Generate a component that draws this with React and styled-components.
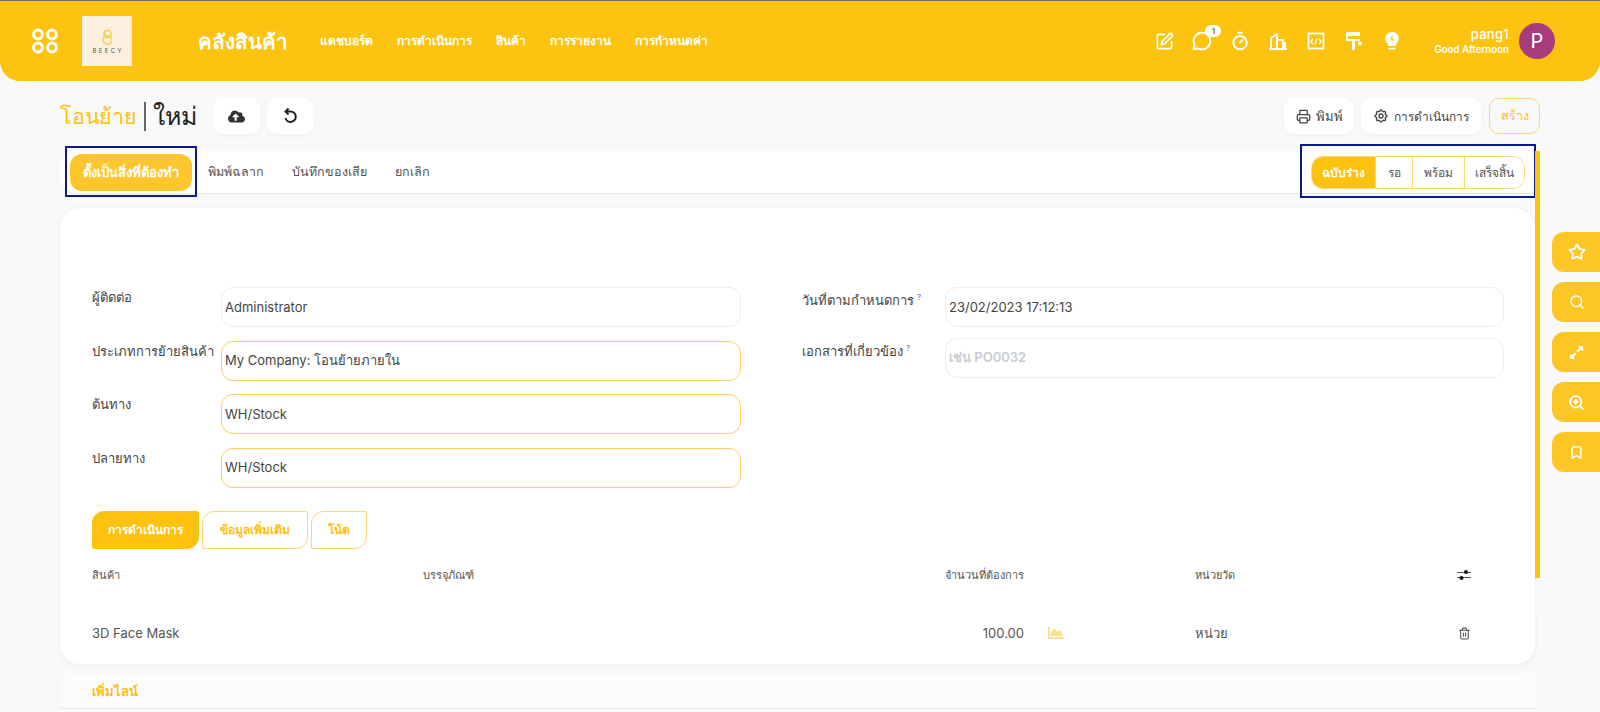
import React from 'react';
import styled, { createGlobalStyle } from 'styled-components';
import {
  SquarePen, MessageCircle, Timer, Printer, Star, Search, ZoomIn, Bookmark, Trash2,
} from 'lucide-react';
import { FaCloudUploadAlt, FaExpandAlt, FaChartArea } from 'react-icons/fa';
import { TbSettings } from 'react-icons/tb';

const GlobalStyle = createGlobalStyle`
  html, body { margin: 0; padding: 0; }
  body {
    background: #f9f9f9;
    font-family: Inter, "Noto Sans", "Open Sans", sans-serif;
    color: #444;
  }
  * { box-sizing: border-box; }
`;

const Page = styled.div`
  position: relative;
  width: 1600px;
  height: 712px;
  overflow: hidden;
  background: #f9f9f9;
  border-top: 1px solid #77705a;
`;

const Header = styled.header`
  height: 80px;
  background: #fdc311;
  border-radius: 0 0 20px 20px;
  display: flex;
  align-items: center;
  padding: 0 45px 0 31px;
  color: #fff;
`;

const Logo = styled.div`
  width: 50px;
  height: 50px;
  margin-left: 23px;
  background: #fbf0df;
  display: flex;
  flex-direction: column;
  align-items: center;
  justify-content: center;
  gap: 3px;
`;

const LogoWord = styled.span`
  font-size: 6px;
  letter-spacing: 2.4px;
  margin-right: -2.4px;
  color: #555;
  line-height: 6px;
`;

const AppTitle = styled.div`
  margin-left: 66px;
  width: 122px;
  font-size: 20.5px;
  font-weight: 600;
`;

const Nav = styled.nav`
  display: flex;
  gap: 24px;
  font-size: 12px;
  font-weight: 700;
  padding-bottom: 1px;
`;

const HeaderRight = styled.div`
  margin-left: auto;
  display: flex;
  align-items: center;
`;

const HeaderIcons = styled.div`
  display: flex;
  align-items: center;
  gap: 18px;
  margin-right: 32px;
`;

const IconSlot = styled.span`
  position: relative;
  width: 20px;
  height: 20px;
  display: flex;
  align-items: center;
  justify-content: center;
`;

const Badge = styled.span`
  position: absolute;
  top: -6px;
  right: -9px;
  width: 16px;
  height: 12px;
  border-radius: 6px;
  background: #fff;
  color: #8a7a3a;
  font-size: 8px;
  font-weight: 700;
  line-height: 12px;
  text-align: center;
`;

const UserText = styled.div`
  text-align: right;
  font-weight: 500;
  margin-right: 10px;
`;

const UserName = styled.div`
  font-size: 13px;
  letter-spacing: 0.3px;
  line-height: 16px;
`;

const Greeting = styled.div`
  font-size: 9.7px;
  font-weight: 600;
  line-height: 15px;
`;

const Avatar = styled.div`
  width: 36px;
  height: 36px;
  border-radius: 50%;
  background: #a93c7c;
  font-size: 20px;
  line-height: 36px;
  text-align: center;
`;

const Content = styled.main`
  padding: 17px 65px 0 60px;
`;

const TitleRow = styled.div`
  height: 36px;
  margin-right: -5px;
  display: flex;
  align-items: center;
`;

const Crumb = styled.span`
  font-size: 21.5px;
  letter-spacing: -0.2px;
  line-height: 36px;
  color: #fcc20f;
`;

const CrumbCurrent = styled.span`
  font-size: 25px;
  line-height: 29px;
  color: #222;
  border-left: 2px solid #666;
  margin-left: 7px;
  padding-left: 7px;
  margin-right: 16px;
`;

const WhiteButton = styled.button`
  height: 36px;
  width: ${p => p.$w}px;
  margin-right: 7px;
  border: 0;
  border-radius: 10px;
  background: #fff;
  color: #444;
  font: inherit;
  font-size: ${p => p.$fs || 13}px;
  display: flex;
  align-items: center;
  justify-content: center;
  gap: 5px;
  box-shadow: 0 2px 6px rgba(0, 0, 0, 0.03);
`;

const TitleActions = styled.div`
  margin-left: auto;
  display: flex;
  align-items: center;
`;

const CreateButton = styled.button`
  height: 36px;
  width: 51px;
  margin-left: 1px;
  border: 1px solid #fdd67c;
  border-radius: 10px;
  background: transparent;
  color: #fcc20f;
  font: inherit;
  font-size: 12.5px;
  padding: 0;
`;

const Toolbar = styled.div`
  height: 43px;
  margin-top: 17px;
  background: #fff;
  border-radius: 16px 0 0 16px;
  border-bottom: 1px solid #e8e8e8;
  display: flex;
  align-items: center;
  padding-left: 5px;
`;

const Highlight = styled.div`
  border: 2px solid #0b1a85;
  padding: ${p => p.$pad};
  margin-top: -1px;
  display: flex;
  flex-shrink: 0;
`;

const TodoButton = styled.button`
  width: 122px;
  height: 37px;
  border: 0;
  border-radius: 12px;
  background: #fcc62c;
  color: #fff;
  font: inherit;
  font-size: 13px;
  font-weight: 700;
  padding: 0;
  white-space: nowrap;
`;

const ToolLink = styled.span`
  font-size: 12.5px;
  color: #555;
  margin-left: ${p => p.$ml}px;
`;

const StatusGroup = styled(Highlight)`
  margin-left: auto;
  margin-right: -1px;
  margin-top: -3px;
`;

const Pills = styled.div`
  display: flex;
  height: 33px;
  border: 1px solid #fdd67c;
  border-radius: 12px;
  overflow: hidden;
  background: #fff;
`;

const Pill = styled.span`
  width: ${p => p.$w}px;
  display: flex;
  align-items: center;
  justify-content: center;
  font-size: 12px;
  font-weight: ${p => (p.$active ? 700 : 500)};
  color: ${p => (p.$active ? '#fff' : '#555')};
  background: ${p => (p.$active ? '#fcc20f' : '#fff')};
  border-left: ${p => (p.$active ? 0 : '1px solid #fdd67c')};
`;

const Card = styled.section`
  height: 456px;
  margin-top: 14px;
  background: #fff;
  border-radius: 20px;
  padding: 79px 0 0 32px;
  box-shadow: 0 0 4px rgba(0, 0, 0, 0.05);
`;

const FormGrid = styled.div`
  display: grid;
  grid-template-columns: 649px 702px;
  column-gap: 61px;
`;

const FormColumn = styled.div`
  display: flex;
  flex-direction: column;
  gap: ${p => p.$gap}px;
`;

const FormRow = styled.div`
  display: grid;
  grid-template-columns: ${p => p.$label}px 1fr;
`;

const Label = styled.label`
  font-size: 13px;
  line-height: 20px;
  color: #444;
`;

const Help = styled.sup`
  font-size: 8px;
  color: #7a72b0;
  margin-left: 3px;
`;

const Field = styled.div`
  height: 40px;
  border: 1px solid ${p => (p.$required ? '#fdcf5e' : '#ececf4')};
  border-radius: 12px;
  padding: 0 3px 1px;
  display: flex;
  align-items: center;
  font-size: 13px;
  color: ${p => (p.$placeholder ? '#c8ccd4' : '#444')};
  font-weight: ${p => (p.$placeholder ? 600 : 400)};
`;

const Tabs = styled.div`
  display: flex;
  gap: 3px;
  margin-top: 23px;
`;

const Tab = styled.div`
  width: ${p => p.$w}px;
  height: 38px;
  border: 1px solid #fdd67c;
  border-radius: 12px 2px 12px 2px;
  display: flex;
  align-items: center;
  justify-content: center;
  font-size: 12px;
  font-weight: 700;
  color: ${p => (p.$active ? '#fff' : '#fcc20f')};
  background: ${p => (p.$active ? '#fcc20f' : '#fff')};
  border-color: ${p => (p.$active ? '#fcc20f' : '#fdd67c')};
`;

const TableGrid = styled.div`
  display: grid;
  grid-template-columns: 331px 400px 201px 171px 249px 40px;
  align-items: center;
`;

const TableHead = styled(TableGrid)`
  height: 26px;
  margin-top: 13px;
  font-size: 11px;
  color: #555;
`;

const TableRow = styled(TableGrid)`
  height: 63px;
  margin: 14px 0 0 -32px;
  padding-left: 32px;
  border-radius: 20px;
  box-shadow: 0 4px 8px rgba(0, 0, 0, 0.025);
  font-size: 13px;
  color: #555;
`;

const Numeric = styled.span`
  text-align: right;
`;

const ForecastIcon = styled.span`
  display: flex;
  color: #fddf8c;
  padding-left: 24px;
`;

const ActionCell = styled.span`
  display: flex;
  justify-content: center;
  color: #555;
`;

const AddLine = styled.div`
  height: 34px;
  margin-top: 11px;
  padding-left: 32px;
  display: flex;
  align-items: center;
  background: #fbfbfb;
  border-bottom: 1px solid #ececec;
  font-size: 13px;
  font-weight: 700;
  color: #fcc20f;
`;

const ScrollThumb = styled.div`
  position: absolute;
  left: 1535px;
  top: 150px;
  width: 5px;
  height: 427px;
  background: #fcc20f;
`;

const SideDock = styled.aside`
  position: absolute;
  right: 0;
  top: 231px;
  display: flex;
  flex-direction: column;
  gap: 10px;
`;

const DockButton = styled.button`
  width: 48px;
  height: 40px;
  border: 0;
  padding: 0 0 0 1px;
  border-radius: 12px 0 0 12px;
  background: #fcc626;
  color: #fff;
  display: flex;
  align-items: center;
  justify-content: center;
`;

const MenuGlyph = () => (
  <svg width="28" height="26" viewBox="0 0 28 26" fill="none" stroke="#fff" strokeWidth="3">
    <circle cx="7" cy="6.5" r="4.4" />
    <circle cx="21" cy="6.5" r="4.4" />
    <circle cx="7" cy="19.5" r="4.4" />
    <circle cx="21" cy="19.5" r="4.4" />
  </svg>
);

const BeeMark = () => (
  <svg width="11" height="16" viewBox="0 0 11 16" fill="none" stroke="#f5d24b" strokeWidth="1.6">
    <path d="M3 1v5" />
    <circle cx="5.5" cy="5" r="3.6" />
    <circle cx="5.5" cy="11" r="4.2" />
  </svg>
);

const UndoGlyph = () => (
  <svg width="18" height="18" viewBox="0 0 18 18" fill="none" stroke="#222" strokeWidth="2">
    <path d="M5 4.5h4.5a5.2 5.2 0 1 1-5 6.5" />
    <path d="M7.5 1.5l-3 3 3 3" />
  </svg>
);

const BuildingGlyph = () => (
  <svg width="20" height="20" viewBox="0 0 20 20" fill="none" stroke="#fff" strokeWidth="1.8" strokeLinejoin="round">
    <path d="M1 18h18M3 18V7l6-4v15M9 9h6v9M17 18v-6h-2" />
  </svg>
);

const CodeGlyph = () => (
  <svg width="18" height="18" viewBox="0 0 18 18" fill="none" stroke="#fff" strokeWidth="1.8">
    <rect x="1.5" y="1.5" width="15" height="15" />
    <path d="M6 7 3.8 9.5 6 12M12 7l2.2 2.5L12 12M10 6.5l-2 6" strokeWidth="1.3" />
  </svg>
);

const RollerGlyph = () => (
  <svg width="18" height="20" viewBox="0 0 18 20" fill="#fff">
    <path d="M1 1h14v4H1zM1 5h2v3h12v2H1zM7 10h3v9H7z" />
    <circle cx="15" cy="12.5" r="2" />
  </svg>
);

const BulbGlyph = () => (
  <svg width="18" height="20" viewBox="0 0 18 20">
    <path fill="#fff" d="M9 1a6.6 6.6 0 0 0-4 11.9V15h8v-2.1A6.6 6.6 0 0 0 9 1z" />
    <path fill="#fdc311" d="M9.6 4 6.8 8.6h2L8.4 12l2.8-4.6h-2z" />
    <path stroke="#fff" strokeWidth="1.6" d="M5.5 17.6h7" />
  </svg>
);

const SlidersGlyph = () => (
  <svg width="14" height="14" viewBox="0 0 14 14" fill="#111" stroke="#555">
    <path d="M0 4.5h14M0 9.5h14" strokeWidth="1" />
    <circle cx="9" cy="4" r="2" stroke="none" />
    <circle cx="4.5" cy="10" r="2" stroke="none" />
  </svg>
);

const leftFields = [
  { label: 'ผู้ติดต่อ', value: 'Administrator' },
  { label: 'ประเภทการย้ายสินค้า', value: 'My Company: โอนย้ายภายใน', required: true },
  { label: 'ต้นทาง', value: 'WH/Stock', required: true },
  { label: 'ปลายทาง', value: 'WH/Stock', required: true },
];

export default function App() {
  return (
    <Page>
      <GlobalStyle />
      <Header>
        <MenuGlyph />
        <Logo>
          <BeeMark />
          <LogoWord>BEECY</LogoWord>
        </Logo>
        <AppTitle>คลังสินค้า</AppTitle>
        <Nav>
          <span>แดชบอร์ด</span>
          <span>การดำเนินการ</span>
          <span>สินค้า</span>
          <span>การรายงาน</span>
          <span>การกำหนดค่า</span>
        </Nav>
        <HeaderRight>
          <HeaderIcons>
            <IconSlot><SquarePen size={19} strokeWidth={2.2} /></IconSlot>
            <IconSlot>
              <MessageCircle size={20} strokeWidth={2.2} />
              <Badge>1</Badge>
            </IconSlot>
            <IconSlot><Timer size={20} strokeWidth={2.4} /></IconSlot>
            <IconSlot><BuildingGlyph /></IconSlot>
            <IconSlot><CodeGlyph /></IconSlot>
            <IconSlot><RollerGlyph /></IconSlot>
            <IconSlot><BulbGlyph /></IconSlot>
          </HeaderIcons>
          <UserText>
            <UserName>pang1</UserName>
            <Greeting>Good Afternoon</Greeting>
          </UserText>
          <Avatar>P</Avatar>
        </HeaderRight>
      </Header>

      <Content>
        <TitleRow>
          <Crumb>โอนย้าย</Crumb>
          <CrumbCurrent>ใหม่</CrumbCurrent>
          <WhiteButton $w={47}><FaCloudUploadAlt size={17} color="#333" /></WhiteButton>
          <WhiteButton $w={47}><UndoGlyph /></WhiteButton>
          <TitleActions>
            <WhiteButton $w={70}><Printer size={15} />พิมพ์</WhiteButton>
            <WhiteButton $w={120} $fs={12}><TbSettings size={16} />การดำเนินการ</WhiteButton>
            <CreateButton>สร้าง</CreateButton>
          </TitleActions>
        </TitleRow>

        <Toolbar>
          <Highlight $pad="6px 3px 4px">
            <TodoButton>ตั้งเป็นสิ่งที่ต้องทำ</TodoButton>
          </Highlight>
          <ToolLink $ml={11}>พิมพ์ฉลาก</ToolLink>
          <ToolLink $ml={28}>บันทึกของเสีย</ToolLink>
          <ToolLink $ml={28}>ยกเลิก</ToolLink>
          <StatusGroup $pad="10px 9px 7px">
            <Pills>
              <Pill $w={63} $active>ฉบับร่าง</Pill>
              <Pill $w={37}>รอ</Pill>
              <Pill $w={52}>พร้อม</Pill>
              <Pill $w={60}>เสร็จสิ้น</Pill>
            </Pills>
          </StatusGroup>
        </Toolbar>

        <Card>
          <FormGrid>
            <FormColumn $gap={13.67}>
              {leftFields.map(f => (
                <FormRow $label={129} key={f.label}>
                  <Label>{f.label}</Label>
                  <Field $required={f.required}>{f.value}</Field>
                </FormRow>
              ))}
            </FormColumn>
            <FormColumn $gap={11}>
              <FormRow $label={143}>
                <Label>วันที่ตามกำหนดการ<Help>?</Help></Label>
                <Field>23/02/2023 17:12:13</Field>
              </FormRow>
              <FormRow $label={143}>
                <Label>เอกสารที่เกี่ยวข้อง<Help>?</Help></Label>
                <Field $placeholder>เช่น PO0032</Field>
              </FormRow>
            </FormColumn>
          </FormGrid>

          <Tabs>
            <Tab $w={107} $active>การดำเนินการ</Tab>
            <Tab $w={106}>ข้อมูลเพิ่มเติม</Tab>
            <Tab $w={56}>โน้ต</Tab>
          </Tabs>

          <TableHead>
            <span>สินค้า</span>
            <span>บรรจุภัณฑ์</span>
            <Numeric>จำนวนที่ต้องการ</Numeric>
            <span />
            <span>หน่วยวัด</span>
            <ActionCell><SlidersGlyph /></ActionCell>
          </TableHead>
          <TableRow>
            <span>3D Face Mask</span>
            <span />
            <Numeric>100.00</Numeric>
            <ForecastIcon><FaChartArea size={16} /></ForecastIcon>
            <span>หน่วย</span>
            <ActionCell><Trash2 size={13} /></ActionCell>
          </TableRow>
        </Card>

        <AddLine>เพิ่มไลน์</AddLine>
      </Content>

      <ScrollThumb />

      <SideDock>
        <DockButton><Star size={18} strokeWidth={2.4} /></DockButton>
        <DockButton><Search size={16} strokeWidth={2.2} /></DockButton>
        <DockButton><FaExpandAlt size={15} /></DockButton>
        <DockButton><ZoomIn size={17} strokeWidth={2.6} /></DockButton>
        <DockButton><Bookmark size={15} strokeWidth={2.2} /></DockButton>
      </SideDock>
    </Page>
  );
}
